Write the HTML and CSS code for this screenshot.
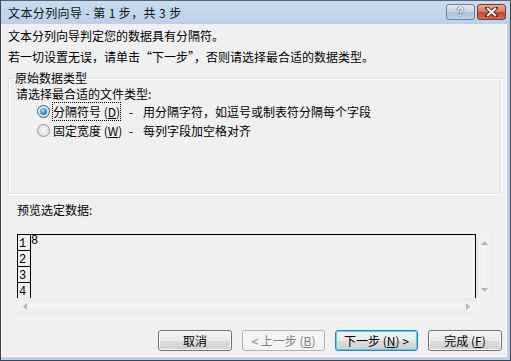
FILE: index.html
```html
<!DOCTYPE html>
<html lang="zh-CN">
<head>
    <meta charset="UTF-8">
    <title>文本分列向导</title>
    <link rel="stylesheet" href="styles.css">
</head>
<body>
    <div class="window">
        <div class="titlebar">
            <span class="title">文本分列向导 - 第 1 步，共 3 步</span>
            <div class="caption-buttons">
                <span class="cap-btn help">?</span>
                <span class="cap-btn close">
                    <svg width="13" height="10" viewBox="0 0 13 10">
                        <path d="M2 1 L11 9 M11 1 L2 9" stroke="#4a1a10" stroke-width="3.6" stroke-linecap="square"/>
                        <path d="M2 1 L11 9 M11 1 L2 9" stroke="#fff" stroke-width="2"/>
                    </svg>
                </span>
            </div>
        </div>
        <div class="client">
            <p class="intro">文本分列向导判定您的数据具有分隔符。</p>
            <p class="intro">若一切设置无误，请单击“下一步”，否则请选择最合适的数据类型。</p>

            <fieldset class="group">
                <legend>原始数据类型</legend>
                <div class="prompt">请选择最合适的文件类型:</div>
                <div class="option">
                    <span class="radio checked"></span>
                    <span class="opt-label"><span class="focus">分隔符号 (<u>D</u>)</span></span>
                    <span class="opt-desc"><span class="dash">-</span>用分隔字符，如逗号或制表符分隔每个字段</span>
                </div>
                <div class="option">
                    <span class="radio"></span>
                    <span class="opt-label">固定宽度 (<u>W</u>)</span>
                    <span class="opt-desc"><span class="dash">-</span>每列字段加空格对齐</span>
                </div>
            </fieldset>

            <div class="preview-label">预览选定数据:</div>
            <div class="preview">
                <div class="grid">
                    <div class="rownums">
                        <div class="rownum">1</div>
                        <div class="rownum">2</div>
                        <div class="rownum">3</div>
                        <div class="rownum">4</div>
                    </div>
                    <div class="data">8</div>
                </div>
                <div class="vscroll">
                    <svg width="7" height="4" viewBox="0 0 7 4"><polygon points="0,4 3.5,0 7,4" fill="#b4b4b4"/></svg>
                    <svg width="7" height="4" viewBox="0 0 7 4"><polygon points="0,0 3.5,4 7,0" fill="#b4b4b4"/></svg>
                </div>
                <div class="hscroll">
                    <svg width="4" height="7" viewBox="0 0 4 7"><polygon points="4,0 0,3.5 4,7" fill="#b4b4b4"/></svg>
                    <svg width="4" height="7" viewBox="0 0 4 7"><polygon points="0,0 4,3.5 0,7" fill="#b4b4b4"/></svg>
                </div>
                <div class="corner"></div>
            </div>

            <div class="buttons">
                <button class="btn narrow">取消</button>
                <button class="btn wide" disabled>&lt; 上一步 (<u>B</u>)</button>
                <button class="btn wide default">下一步 (<u>N</u>) &gt;</button>
                <button class="btn narrow">完成 (<u>F</u>)</button>
            </div>
        </div>
    </div>
</body>
</html>
```

FILE: styles.css
```css
body {
    margin: 0;
    font-family: "Noto Sans CJK SC", "Liberation Sans", sans-serif;
    font-size: 12px;
    color: #000;
    background: #f0f0f0;
}

.window {
    width: 511px;
    height: 361px;
    box-sizing: border-box;
    display: flex;
    flex-direction: column;
    border: 1px solid #3a4753;
    border-top-color: #56687a;
    background: #b9d1ea;
}

.titlebar {
    height: 23px;
    display: flex;
    align-items: center;
    justify-content: space-between;
    padding-left: 7px;
    background: linear-gradient(#c9dbee, #b9d1ea);
}

.title {
    font-size: 12px;
    color: #111;
    letter-spacing: 0.4px;
}

.caption-buttons {
    display: flex;
    gap: 2px;
    margin-right: 4px;
    align-self: flex-start;
    margin-top: 3px;
}

.cap-btn {
    height: 16px;
    box-sizing: border-box;
    border: 1px solid #6f829a;
    border-radius: 3px;
    display: flex;
    align-items: center;
    justify-content: center;
}

.help {
    width: 29px;
    background: linear-gradient(#dfe8f2, #c3d3e4 50%, #aec3d9 51%, #bdd0e3);
    color: #fff;
    font-family: "Liberation Sans", sans-serif;
    font-weight: bold;
    font-size: 12px;
    text-shadow: 0 0 1px #35485e, 0 0 1px #35485e, 0 0 1px #35485e;
}

.close {
    width: 29px;
    border-color: #7a3a2e;
    background: linear-gradient(#e8a898, #d47a66 50%, #c2452f 51%, #d06a4c);
}

.client {
    flex: 1;
    margin: 0 3px 3px 0;
    background: #f0f0f0;
    box-shadow: inset -1px -1px 0 #fdfdfd;
    display: flex;
    flex-direction: column;
    padding: 1px 0 0 7px;
}

.intro {
    margin: 0;
    line-height: 21px;
}

.group {
    margin: 3px 6px 0 0;
    padding: 0 0 0 7px;
    height: 124px;
    box-sizing: border-box;
    border: 1px solid #dde3e7;
    box-shadow: inset 1px 1px 0 #fff, 1px 1px 0 #fff;
}

.group legend {
    padding: 0 1px;
    margin-left: -2px;
    line-height: 16px;
}

.prompt {
    line-height: 16px;
}

.option {
    display: flex;
    align-items: center;
    height: 19px;
    padding-left: 21px;
}

.radio {
    width: 13px;
    height: 13px;
    box-sizing: border-box;
    border-radius: 50%;
    border: 1px solid #8e9396;
    background: radial-gradient(circle at 50% 45%, #f7f7f7, #dadada);
    margin-right: 3px;
    position: relative;
}

.radio.checked {
    border-color: #2c628b;
}

.radio.checked::after {
    content: "";
    position: absolute;
    left: 2px;
    top: 2px;
    width: 7px;
    height: 7px;
    border-radius: 50%;
    background: radial-gradient(circle at 40% 35%, #a8e3f8, #1f8bc7 60%, #12567f);
}

.opt-label {
    width: 76px;
}

.focus {
    outline: 1px dotted #000;
    outline-offset: 0;
}

.dash {
    display: inline-block;
    width: 14px;
}

.preview-label {
    margin: 6px 0 0 9px;
    line-height: 20px;
}

.preview {
    margin: 14px 0 0 9px;
    display: grid;
    grid-template-columns: 459px 17px;
    grid-template-rows: 64px 17px;
}

.grid {
    border: 1px solid #000;
    border-bottom: none;
    display: flex;
    overflow: hidden;
}

.rownums {
    width: 12px;
    border-right: 1px solid #000;
    flex-shrink: 0;
}

.rownum {
    height: 15px;
    border-bottom: 1px solid #000;
    font-family: "Liberation Mono", monospace;
    font-size: 12px;
    line-height: 12px;
    display: flex;
    align-items: flex-end;
    padding-left: 1px;
}

.data {
    font-family: "Liberation Mono", monospace;
    font-size: 12px;
    line-height: 13px;
}

.vscroll {
    display: flex;
    flex-direction: column;
    justify-content: space-between;
    align-items: center;
    padding: 7px 0 6px;
    background: linear-gradient(90deg, #eaeaea, #f4f4f4 40%, #ececec);
}

.hscroll {
    display: flex;
    justify-content: space-between;
    align-items: center;
    padding: 0 6px;
    background: linear-gradient(#eaeaea, #f4f4f4 40%, #ececec);
}

.corner {
    background: #f0f0f0;
}

.buttons {
    margin-top: auto;
    display: flex;
    justify-content: flex-end;
    gap: 10px;
    padding: 0 5px 6px 0;
}

.btn {
    height: 21px;
    box-sizing: border-box;
    font-family: "Noto Sans CJK SC", "Liberation Sans", sans-serif;
    font-size: 12px;
    color: #000;
    border: 1px solid #707070;
    border-radius: 3px;
    background: linear-gradient(#f2f2f2, #ebebeb 50%, #dddddd 51%, #cfcfcf);
    box-shadow: inset 0 0 0 1px #fcfcfc;
    padding: 0;
    line-height: 17px;
}

.btn.narrow {
    width: 74px;
}

.btn.wide {
    width: 83px;
}

.btn.default {
    border-color: #3c7fb1;
    box-shadow: inset 0 0 0 1px #48d4f6;
}

.btn:disabled {
    border-color: #adb2b5;
    background: #f4f4f4;
    color: #838383;
    box-shadow: none;
}
```
